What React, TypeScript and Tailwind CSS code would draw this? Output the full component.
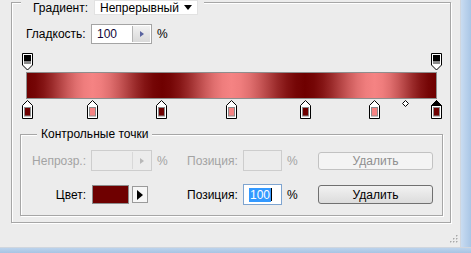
import React from "react";

const DARK = "#6f0000";
const LIGHT = "#f58383";

const stops = [
  { p: 0, c: DARK },
  { p: 16, c: LIGHT },
  { p: 33, c: DARK },
  { p: 50, c: LIGHT },
  { p: 68, c: DARK },
  { p: 85, c: LIGHT },
  { p: 100, c: DARK, sel: true },
];

function hex(c: string) {
  return [1, 3, 5].map((i) => parseInt(c.slice(i, i + 2), 16));
}

function buildGradient() {
  const parts: string[] = [];
  for (let i = 0; i < stops.length - 1; i++) {
    const a = stops[i];
    const b = stops[i + 1];
    const ca = hex(a.c);
    const cb = hex(b.c);
    const n = 8;
    for (let k = 0; k < n; k++) {
      const t = k / n;
      const e = t * t * (3 - 2 * t);
      const col = ca.map((v, j) => Math.round(v + (cb[j] - v) * e));
      parts.push(`rgb(${col.join(",")}) ${(a.p + (b.p - a.p) * t).toFixed(2)}%`);
    }
  }
  parts.push(`${DARK} 100%`);
  return `linear-gradient(to right, ${parts.join(", ")})`;
}

const gradient = buildGradient();

function BottomStop({ color, selected }: { color: string; selected?: boolean }) {
  return (
    <svg width="11" height="19" viewBox="0 0 11 19">
      <polygon points="5.5,0.5 10.5,5.5 10.5,18.5 0.5,18.5 0.5,5.5" fill="#fff" stroke="#000" />
      {selected && <polygon points="5.5,0.5 10.5,5.5 0.5,5.5" fill="#000" stroke="#000" />}
      <rect x="2.5" y="7.5" width="6" height="8.5" fill={color} stroke="#8a8a8a" />
    </svg>
  );
}

function TopStop() {
  return (
    <svg width="11" height="18" viewBox="0 0 11 18">
      <polygon points="0.5,0.5 10.5,0.5 10.5,12 5.5,17 0.5,12" fill="#fff" stroke="#000" />
      <rect x="2" y="2" width="7" height="6.5" fill="#000" />
      <rect x="2" y="8.5" width="7" height="2.5" fill="#8c8c8c" />
    </svg>
  );
}

function pos(p: number) {
  return 1 + (p / 100) * 409 - 5.5;
}

function SpinButton({ disabled }: { disabled?: boolean }) {
  return (
    <div
      className={`flex h-full w-[18px] items-center justify-center border-l ${
        disabled ? "border-[#d8d8d8] bg-[#ececec]" : "border-[#b4b4b4] bg-gradient-to-b from-[#f2f2f2] to-[#d9d9d9]"
      }`}
    >
      <svg width="4" height="6" viewBox="0 0 4 6">
        <polygon points="0,0 4,3 0,6" fill={disabled ? "#b8b8b8" : "#5a64a0"} />
      </svg>
    </div>
  );
}

export default function App() {
  return (
    <div
      className="flex h-[253px] w-[471px] flex-col overflow-hidden bg-[#ececec] text-[12px] text-black"
      style={{ fontFamily: '"Liberation Sans", Arial, sans-serif' }}
    >
      <div className="flex h-[247px] w-full">
        <div className="relative h-full w-[460px] bg-[#ececec]">
          {/* outer group box */}
          <div className="relative ml-[11px] mt-[2px] h-[221px] w-[440px] border border-[#a6a6a6] shadow-[inset_1px_1px_0_#ffffff,1px_1px_0_#ffffff]">
            <div className="absolute left-[9px] top-[-3px] flex h-[15px] items-center bg-[#ececec] pl-[12px] pr-[6px]">
              <span className="leading-none">Градиент:</span>
              <div className="ml-[6px] flex h-[15px] w-[104px] items-center border border-[#e2e2e2] bg-white pl-[5px]">
                <span className="leading-none">Непрерывный</span>
                <svg className="ml-auto mr-[5px]" width="8" height="5" viewBox="0 0 8 5">
                  <polygon points="0,0 8,0 4,5" fill="#000" />
                </svg>
              </div>
            </div>

            {/* smoothness row */}
            <div className="ml-[14px] mt-[21px] flex h-[20px] items-center">
              <span className="w-[65px] leading-none">Гладкость:</span>
              <div className="flex h-[20px] w-[61px] items-center border border-[#a4a4a4] bg-white">
                <span className="flex-1 pl-[5px] leading-none text-[#10063a]">100</span>
                <div className="mr-[1px] h-[16px]">
                  <SpinButton />
                </div>
              </div>
              <span className="ml-[5px] leading-none">%</span>
            </div>

            {/* gradient editor */}
            <div className="relative ml-[14px] mt-[9px] w-[411px]">
              <div className="relative h-[19px]">
                <div className="absolute top-0" style={{ left: pos(0) }}>
                  <TopStop />
                </div>
                <div className="absolute top-0" style={{ left: pos(100) }}>
                  <TopStop />
                </div>
              </div>
              <div className="h-[27px] w-[411px] border border-[#8e8e8e]" style={{ background: gradient }} />
              <div className="relative h-[20px]">
                {stops.map((s) => (
                  <div key={s.p} className="absolute top-[1px]" style={{ left: pos(s.p) }}>
                    <BottomStop color={s.c} selected={s.sel} />
                  </div>
                ))}
                <div className="absolute top-[1px]" style={{ left: 1 + 0.925 * 409 - 3.5 }}>
                  <svg width="7" height="7" viewBox="0 0 7 7">
                    <polygon points="3.5,0.5 6.5,3.5 3.5,6.5 0.5,3.5" fill="#fff" stroke="#000" />
                  </svg>
                </div>
              </div>
            </div>

            {/* control points group */}
            <div className="relative ml-[8px] mt-[15px] h-[82px] w-[423px] border border-[#a6a6a6] shadow-[inset_1px_1px_0_#ffffff,1px_1px_0_#ffffff]">
              <div className="absolute left-[16px] top-[-8px] bg-[#ececec] px-[4px] leading-[14px]">
                Контрольные точки
              </div>

              {/* opacity row (disabled) */}
              <div className="mt-[15px] flex h-[21px] items-center text-[#a3a3a3]">
                <span className="w-[67px] pr-[2px] text-right leading-none">Непрозр.:</span>
                <div className="ml-[3px] flex h-[21px] w-[61px] items-center border border-[#cdcdcd] bg-[#ececec]">
                  <div className="flex-1" />
                  <div className="mr-[1px] h-[17px]">
                    <SpinButton disabled />
                  </div>
                </div>
                <span className="w-[35px] pl-[5px] leading-none">%</span>
                <span className="w-[56px] leading-none">Позиция:</span>
                <div className="h-[21px] w-[39px] border border-[#cdcdcd] bg-[#ececec]" />
                <span className="w-[36px] pl-[5px] leading-none">%</span>
                <div className="flex h-[18px] w-[115px] items-center justify-center rounded-[3px] border border-[#c2c2c2] bg-[#f4f4f4] leading-none text-[#8f8f8f]">
                  Удалить
                </div>
              </div>

              {/* color row */}
              <div className="mt-[13px] flex h-[21px] items-center">
                <span className="w-[67px] pr-[2px] text-right leading-none">Цвет:</span>
                <div className="ml-[4px] h-[19px] w-[37px] border border-[#8c8c8c] bg-[#6f0000]" />
                <div className="ml-[3px] flex h-[17px] w-[16px] items-center justify-center border border-[#9a9a9a] bg-[#f6f6f6]">
                  <svg width="6" height="10" viewBox="0 0 6 10">
                    <polygon points="0,0 6,5 0,10" fill="#000" />
                  </svg>
                </div>
                <span className="ml-[39px] w-[56px] leading-none">Позиция:</span>
                <div className="flex h-[21px] w-[39px] items-center border border-[#7ea4d0] bg-white pl-[5px]">
                  <span className="bg-[#3399ff] px-[1px] leading-[14px] text-white">100</span>
                  <span className="h-[13px] w-[1px] bg-black" />
                </div>
                <span className="w-[36px] pl-[5px] leading-none">%</span>
                <div className="flex h-[19px] w-[115px] items-center justify-center rounded-[3px] border border-[#707070] bg-gradient-to-b from-[#f2f2f2] to-[#dcdcdc] leading-none">
                  Удалить
                </div>
              </div>
            </div>
          </div>

          {/* resize grip */}
          <svg className="absolute bottom-[3px] right-[1px]" width="10" height="10" viewBox="0 0 10 10">
            {[
              [7, 1],
              [4, 4],
              [7, 4],
              [1, 7],
              [4, 7],
              [7, 7],
            ].map(([x, y]) => (
              <g key={`${x}-${y}`}>
                <rect x={x + 1} y={y + 1} width="1" height="1" fill="#ffffff" />
                <rect x={x} y={y} width="1.5" height="1.5" fill="#a8a8a8" />
              </g>
            ))}
          </svg>
        </div>
        <div className="h-full w-[1px] bg-[#d0d6de]" />
        <div className="h-full flex-1 bg-gradient-to-r from-[#c9dcf1] to-[#a9c6e6]" />
      </div>
      <div className="h-[1px] w-full bg-[#d0d6de]" />
      <div className="flex-1 bg-gradient-to-b from-[#bcd3ec] to-[#a7c4e4]" />
    </div>
  );
}
